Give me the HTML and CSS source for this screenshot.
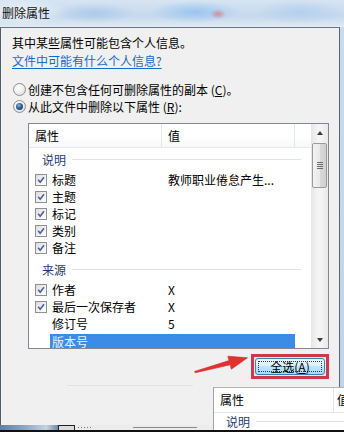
FILE: index.html
```html
<!DOCTYPE html>
<html lang="zh-CN">
<head>
<meta charset="utf-8">
<title>删除属性</title>
<link rel="stylesheet" href="styles.css">
</head>
<body>
<div class="screen">
  <div class="titlebar"><span class="title">删除属性</span></div>
  <div class="dialog">
    <p class="info">其中某些属性可能包含个人信息。</p>
    <a class="link" href="#">文件中可能有什么个人信息?</a>
    <div class="options">
      <div class="radio-row"><span class="radio"></span><span>创建不包含任何可删除属性的副本 (<u>C</u>)。</span></div>
      <div class="radio-row"><span class="radio checked"></span><span>从此文件中删除以下属性 (<u>R</u>):</span></div>
    </div>
    <div class="listbox">
      <div class="list-main">
        <div class="list-header">
          <div class="hcol hcol-name">属性</div>
          <div class="hcol hcol-value">值</div>
          <div class="hcol hcol-rest"></div>
        </div>
        <div class="list-body">
          <div class="group"><span class="group-label">说明</span><span class="group-line"></span></div>
          <div class="row"><span class="cell-check"><span class="check"><svg viewBox="0 0 12 12"><path d="M2.6 5.8 L5 8.6 L9.6 2.6" /></svg></span></span><span class="name">标题</span><span class="value">教师职业倦怠产生...</span></div>
          <div class="row"><span class="cell-check"><span class="check"><svg viewBox="0 0 12 12"><path d="M2.6 5.8 L5 8.6 L9.6 2.6" /></svg></span></span><span class="name">主题</span><span class="value"></span></div>
          <div class="row"><span class="cell-check"><span class="check"><svg viewBox="0 0 12 12"><path d="M2.6 5.8 L5 8.6 L9.6 2.6" /></svg></span></span><span class="name">标记</span><span class="value"></span></div>
          <div class="row"><span class="cell-check"><span class="check"><svg viewBox="0 0 12 12"><path d="M2.6 5.8 L5 8.6 L9.6 2.6" /></svg></span></span><span class="name">类别</span><span class="value"></span></div>
          <div class="row"><span class="cell-check"><span class="check"><svg viewBox="0 0 12 12"><path d="M2.6 5.8 L5 8.6 L9.6 2.6" /></svg></span></span><span class="name">备注</span><span class="value"></span></div>
          <div class="group group-next"><span class="group-label">来源</span><span class="group-line"></span></div>
          <div class="row"><span class="cell-check"><span class="check"><svg viewBox="0 0 12 12"><path d="M2.6 5.8 L5 8.6 L9.6 2.6" /></svg></span></span><span class="name">作者</span><span class="value">X</span></div>
          <div class="row"><span class="cell-check"><span class="check"><svg viewBox="0 0 12 12"><path d="M2.6 5.8 L5 8.6 L9.6 2.6" /></svg></span></span><span class="name">最后一次保存者</span><span class="value">X</span></div>
          <div class="row"><span class="cell-check"></span><span class="name">修订号</span><span class="value">5</span></div>
          <div class="row"><span class="cell-check"></span><span class="sel"><span class="name">版本号</span><span class="value"></span></span></div>
        </div>
      </div>
      <div class="scrollbar">
        <div class="sb-btn"><span class="arrow-up"></span></div>
        <div class="sb-track">
          <div class="sb-thumb"><span class="grip"></span></div>
        </div>
        <div class="sb-btn"><span class="arrow-down"></span></div>
      </div>
    </div>
    <div class="actions">
      <span class="highlight"><button class="btn" type="button"><span class="btn-focus">全选(<u>A</u>)</span></button></span>
    </div>
    <div class="ghost-line"></div>
  </div>
  <div class="footer">
    <span class="tb-blue"></span>
    <span class="tb-icon"></span>
    <span class="tb-dots"></span>
    <span class="tb-line"></span>
  </div>

  <div class="panel">
    <div class="panel-header">
      <div class="panel-col1">属性</div>
      <div class="panel-col2">值</div>
    </div>
    <div class="panel-group"><span class="group-label">说明</span><span class="group-line"></span></div>
  </div>

  <svg class="arrow" viewBox="188 350 64 28" width="64" height="28">
    <polygon points="194.6,371.4 229,360.6 227.9,356.2 247.5,357.8 231.3,369.2 230.2,364.8 195.2,372.8" />
  </svg>
</div>
</body>
</html>
```

FILE: styles.css
```css
* { box-sizing: border-box; }
html, body { margin: 0; padding: 0; }
body {
  width: 344px;
  height: 432px;
  overflow: hidden;
  font-family: "Noto Sans CJK SC", "Noto Sans", "DejaVu Sans", sans-serif;
  font-size: 12px;
  color: #000;
  background: #c8daed;
}
.screen {
  position: relative;
  width: 344px;
  height: 432px;
  display: flex;
  flex-direction: column;
  background: linear-gradient(to bottom, #c9dbee, #bfd3e8);
}

/* title bar */
.titlebar {
  flex: none;
  height: 27px;
  display: flex;
  align-items: center;
  padding: 0 0 1px 2px;
  background:
    radial-gradient(ellipse 8px 5px at 218px 14px, rgba(215,120,130,0.75), rgba(215,120,130,0)),
    radial-gradient(ellipse 45px 11px at 195px 12px, rgba(150,195,240,0.9), rgba(150,195,240,0)),
    radial-gradient(ellipse 40px 10px at 95px 13px, rgba(165,198,232,0.8), rgba(165,198,232,0)),
    radial-gradient(ellipse 45px 12px at 300px 12px, rgba(175,205,235,0.8), rgba(175,205,235,0)),
    radial-gradient(ellipse 50px 14px at 20px 12px, rgba(240,245,250,0.9), rgba(240,245,250,0)),
    linear-gradient(to bottom, #d6e4f2 0%, #c6d9ed 60%, #dbe6f2 92%, #e6eef6 100%);
}
.title {
  font-size: 12px;
  line-height: 14px;
  color: #111;
}

/* dialog body */
.dialog {
  flex: 1;
  width: 340px;
  display: flex;
  flex-direction: column;
  background: #f0f0f0;
  border-left: 1px solid #4f5d6d;
  border-top: 1px solid #66768a;
  border-right: 1px solid #55657a;
  padding: 6px 10px 0 11px;
}
.info {
  margin: 0;
  line-height: 18px;
}
.link {
  display: block;
  line-height: 18px;
  color: #1569c7;
  text-decoration: underline;
  text-underline-offset: 2px;
}
.options {
  margin-top: 11px;
  display: flex;
  flex-direction: column;
}
.radio-row {
  height: 17px;
  display: flex;
  align-items: center;
  gap: 2px;
}
.radio {
  width: 13px;
  height: 13px;
  margin-left: 1px;
  border-radius: 50%;
  border: 1px solid #8d8f93;
  background: radial-gradient(circle at 40% 35%, #ffffff 0%, #ececec 55%, #d2d2d2 100%);
  display: flex;
  align-items: center;
  justify-content: center;
}
.radio.checked::before {
  content: "";
  width: 7px;
  height: 7px;
  border-radius: 50%;
  background: radial-gradient(circle at 40% 35%, #8fb6d8 0%, #2f5f95 45%, #1a3556 100%);
}
u { text-decoration: underline; text-underline-offset: 1px; }

/* list box */
.listbox {
  margin: 8px 0 0 16px;
  height: 226px;
  display: flex;
  border: 1px solid #828790;
  background: #fff;
}
.list-main {
  width: 282px;
  display: flex;
  flex-direction: column;
  overflow: hidden;
}
.list-header {
  height: 24px;
  flex: none;
  display: flex;
  background: linear-gradient(to bottom, #ffffff 0%, #ffffff 55%, #f6f7f8 100%);
  border-bottom: 1px solid #e6e8eb;
}
.hcol {
  line-height: 23px;
  border-right: 1px solid #e4e6e9;
}
.hcol-name { width: 133px; padding-left: 6px; }
.hcol-value { width: 133px; padding-left: 6px; }
.hcol-rest { flex: 1; border-right: none; }

.list-body {
  display: flex;
  flex-direction: column;
}
.group {
  height: 23px;
  display: flex;
  align-items: center;
  padding: 0 10px 0 13px;
}
.group-next { margin-top: 2px; }
.group-label {
  color: #1f3b6e;
  line-height: 14px;
}
.group-line {
  flex: 1;
  height: 1px;
  margin-left: 6px;
  background: #dfe3e9;
}
.row {
  height: 17px;
  display: flex;
  align-items: center;
}
.cell-check {
  width: 23px;
  flex: none;
  padding-left: 6px;
  display: flex;
  align-items: center;
}
.check {
  width: 12px;
  height: 12px;
  border: 1px solid #8e8f8f;
  background: linear-gradient(135deg, #dcdcdc 0%, #f4f4f4 60%, #ffffff 100%);
  display: flex;
}
.check svg {
  width: 10px;
  height: 10px;
}
.check path {
  fill: none;
  stroke: #4a5f9c;
  stroke-width: 1.9;
  stroke-linejoin: miter;
}
.name {
  width: 110px;
  flex: none;
  line-height: 15px;
  white-space: nowrap;
}
.value {
  width: 133px;
  flex: none;
  padding-left: 6px;
  line-height: 15px;
  white-space: nowrap;
}
.sel {
  display: flex;
  height: 15px;
  margin: 1px 0 0 -2px;
  padding-left: 2px;
  background: #3a8ce6;
  color: #e8f2ff;
  align-items: center;
}
.sel .name { line-height: 13px; }

/* scrollbar */
.scrollbar {
  width: 17px;
  display: flex;
  flex-direction: column;
  background: linear-gradient(to right, #e6e6e6, #f4f4f4 40%, #f4f4f4 60%, #e9e9e9);
}
.sb-btn {
  height: 17px;
  flex: none;
  display: flex;
  align-items: center;
  justify-content: center;
}
.arrow-up {
  width: 0; height: 0;
  border-left: 3.5px solid transparent;
  border-right: 3.5px solid transparent;
  border-bottom: 4px solid #3a3a3a;
}
.arrow-down {
  width: 0; height: 0;
  border-left: 3.5px solid transparent;
  border-right: 3.5px solid transparent;
  border-top: 4px solid #3a3a3a;
}
.sb-track {
  flex: 1;
  padding: 2px 1px 0 1px;
}
.sb-thumb {
  height: 45px;
  border: 1px solid #9a9a9a;
  border-radius: 2px;
  background: linear-gradient(to right, #f3f3f3 0%, #e9e9e9 50%, #d9d9d9 51%, #d0d0d0 100%);
  display: flex;
  align-items: center;
  justify-content: center;
}
.grip {
  width: 6px;
  height: 7px;
  background: repeating-linear-gradient(to bottom, #6a6a6a 0 1px, transparent 1px 2px);
}

/* buttons */
.actions {
  display: flex;
  justify-content: flex-end;
  margin-top: 5px;
}
.highlight {
  display: flex;
  border: 3px solid #cf3848;
  padding: 1px;
  background: #f2e4e6;
}
.btn {
  width: 70px;
  height: 17px;
  padding: 2px;
  margin: 0;
  border: 1px solid #3c7fb1;
  border-radius: 3px;
  background: linear-gradient(to bottom, #eaf6fd 0%, #d9f0fc 45%, #bee6fd 50%, #a7d9f5 100%);
  font-family: inherit;
  font-size: 12px;
  color: #000;
  display: flex;
}
.btn-focus {
  flex: 1;
  border: 1px dotted #333;
  display: flex;
  align-items: center;
  justify-content: center;
  line-height: 11px;
}
.ghost-line {
  margin: 6px 0 0 55px;
  width: 126px;
  height: 1px;
  background: #e2e2e2;
}

/* bottom strip */
.footer {
  flex: none;
  height: 7px;
  display: flex;
  align-items: flex-start;
  background: #ececec;
  border-bottom: 2px solid #111;
}
.tb-blue {
  width: 58px;
  height: 5px;
  background: linear-gradient(to right, #5f7ea8, #8fa9c6 45%, #c5d3e0 80%, #6f87a6);
}
.tb-icon {
  width: 17px;
  height: 5px;
  border: 1px solid #222;
  border-bottom: none;
  background: #dcdcdc;
}
.tb-dots {
  width: 14px;
  height: 1px;
  margin: 2px 0 0 3px;
  background: repeating-linear-gradient(to right, #777 0 1px, transparent 1px 3px);
}
.tb-line {
  width: 64px;
  height: 1px;
  margin: 2px 0 0 41px;
  background: #8a8a8a;
}

/* overlapping window piece */
.panel {
  position: absolute;
  left: 213px;
  top: 387px;
  width: 131px;
  height: 43px;
  background: #fff;
  border-left: 1px solid #a3a3a3;
  border-top: 1px solid #b3b3b3;
  overflow: hidden;
}
.panel-header {
  height: 25px;
  display: flex;
  border-bottom: 1px solid #e3e5e8;
}
.panel-col1 {
  width: 120px;
  flex: none;
  padding-left: 6px;
  line-height: 24px;
  border-right: 1px solid #e2e4e7;
}
.panel-col2 {
  padding-left: 3px;
  line-height: 24px;
  white-space: nowrap;
}
.panel-group {
  height: 17px;
  display: flex;
  align-items: center;
  padding-left: 12px;
}

/* annotation arrow */
.arrow {
  position: absolute;
  left: 188px;
  top: 350px;
  pointer-events: none;
}
.arrow polygon {
  fill: #e5302e;
  stroke: #c8242a;
  stroke-width: 0.6;
}
```
